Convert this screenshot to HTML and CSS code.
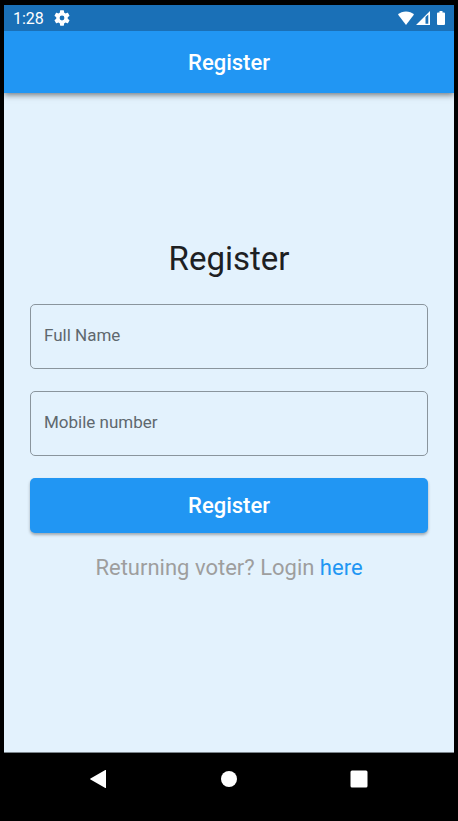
FILE: index.html
```html
<!DOCTYPE html>
<html lang="en">
<head>
<meta charset="utf-8">
<meta name="viewport" content="width=device-width, initial-scale=1">
<title>Register</title>
<link rel="stylesheet" href="styles.css">
</head>
<body>
<div class="device">
  <div class="screen">
    <div class="status-bar">
      <div class="status-group status-left">
        <span>1:28</span>
        <svg width="16" height="16" viewBox="2 2 20 20" fill="currentColor" aria-hidden="true"><path d="M19.14 12.94c.04-.3.06-.61.06-.94 0-.32-.02-.64-.07-.94l2.03-1.58a.49.49 0 0 0 .12-.61l-1.92-3.32a.49.49 0 0 0-.59-.22l-2.39.96c-.5-.38-1.03-.7-1.62-.94l-.36-2.54a.48.48 0 0 0-.48-.41h-3.84c-.24 0-.43.17-.47.41l-.36 2.54c-.59.24-1.13.57-1.62.94l-2.39-.96c-.22-.08-.47 0-.59.22L2.74 8.87c-.12.21-.08.47.12.61l2.03 1.58c-.05.3-.09.63-.09.94s.02.64.07.94l-2.03 1.58a.49.49 0 0 0-.12.61l1.92 3.32c.12.22.37.29.59.22l2.39-.96c.5.38 1.03.7 1.62.94l.36 2.54c.05.24.24.41.48.41h3.84c.24 0 .44-.17.47-.41l.36-2.54c.59-.24 1.13-.56 1.62-.94l2.39.96c.22.08.47 0 .59-.22l1.92-3.32a.48.48 0 0 0-.12-.61l-2.01-1.58zM12 15a3 3 0 1 1 0-6 3 3 0 0 1 0 6z"/></svg>
      </div>
      <div class="status-group status-right">
        <svg width="16" height="14" viewBox="0 0 16 14" fill="currentColor" aria-hidden="true"><path d="M8 14 0 3.6C2 1.700 4.900.5 8 .5s6 1.200 8 3.100z"/></svg>
        <svg width="14" height="14" viewBox="0 0 14 14" fill="currentColor" aria-hidden="true"><path d="M0 14 14 0v14zM9.500 6v6.800h2.800V3.500z" fill-rule="evenodd"/></svg>
        <svg class="battery" width="8" height="14" viewBox="0 0 8 14" fill="currentColor" aria-hidden="true"><path d="M2.500 0h3v1.500H7a1 1 0 0 1 1 1V13a1 1 0 0 1-1 1H1a1 1 0 0 1-1-1V2.500a1 1 0 0 1 1-1h1.500z"/></svg>
      </div>
    </div>
    <header class="app-bar">Register</header>
    <main class="content">
      <h1 class="title">Register</h1>
      <form class="form">
        <div class="field">
          <input class="field-input" id="full-name" type="text" placeholder=" ">
          <label class="field-label" for="full-name">Full Name</label>
        </div>
        <div class="field">
          <input class="field-input" id="mobile" type="tel" placeholder=" ">
          <label class="field-label" for="mobile">Mobile number</label>
        </div>
        <button class="submit" type="submit">Register</button>
      </form>
      <p class="login">Returning voter? Login <a class="login-link" href="#login">here</a></p>
    </main>
  </div>
  <nav class="nav-bar" aria-label="System">
    <button class="nav-button" type="button" aria-label="Back"><svg width="18" height="18" viewBox="0 0 18 18" fill="currentColor"><path d="M16 .4v17.200q0 .7-.7.300L.5 9.500q-.8-.5 0-1L15.300.1q.7-.4.7.3z"/></svg></button>
    <button class="nav-button" type="button" aria-label="Home"><svg width="18" height="18" viewBox="0 0 18 18" fill="currentColor"><circle cx="9" cy="9" r="8"/></svg></button>
    <button class="nav-button" type="button" aria-label="Recent apps"><svg width="18" height="18" viewBox="0 0 18 18" fill="currentColor"><rect x=".5" y=".5" width="17" height="17" rx="1.500"/></svg></button>
  </nav>
</div>
</body>
</html>
```

FILE: styles.css
```css
* {
  box-sizing: border-box;
}

body {
  margin: 0;
  background: #000;
  font-family: Roboto, "Liberation Sans", sans-serif;
}

.device {
  display: flex;
  flex-direction: column;
  min-height: 100vh;
  padding: 5px 4px 0;
}

.screen {
  flex: 1;
  display: flex;
  flex-direction: column;
  background: #e3f2fd;
  border-bottom: 1px solid #7c858b;
}

.status-bar {
  display: flex;
  justify-content: space-between;
  align-items: center;
  height: 26px;
  padding: 0 9px;
  background: #1a70b7;
  color: #fff;
  font-size: 16px;
}

.status-group {
  display: flex;
  align-items: center;
}

.status-left {
  gap: 10px;
}

.status-right {
  gap: 2px;
}

.battery {
  margin-left: 5px;
}

.app-bar {
  display: flex;
  align-items: center;
  justify-content: center;
  height: 62px;
  background: #2196f3;
  color: #fff;
  font-size: 22px;
  font-weight: 500;
  box-shadow: 0 2px 6px rgba(0, 0, 0, 0.5);
  clip-path: inset(0 0 -12px 0);
}

.content {
  flex: 1;
  display: flex;
  flex-direction: column;
  justify-content: center;
  padding: 0 26px 25px;
}

.title {
  margin: 0 0 25px;
  color: #1d2022;
  font-size: 33px;
  font-weight: 400;
  line-height: 40px;
  text-align: center;
}

.form {
  display: flex;
  flex-direction: column;
  gap: 22px;
}

.field {
  display: grid;
  align-items: center;
}

.field-input,
.field-label {
  grid-area: 1 / 1;
}

.field-input {
  width: 100%;
  height: 65px;
  padding: 0 13px;
  border: 1px solid #8a959d;
  border-radius: 5px;
  background: transparent;
  color: #1d2022;
  font: inherit;
  font-size: 17px;
}

.field-label {
  padding: 0 14px 4px;
  color: #5f686e;
  font-size: 17px;
  pointer-events: none;
}

.field-input:not(:placeholder-shown) + .field-label {
  visibility: hidden;
}

.submit {
  height: 55px;
  border: 0;
  border-radius: 5px;
  background: #2196f3;
  color: #fff;
  font: inherit;
  font-size: 22px;
  font-weight: 500;
  box-shadow: 0 2px 3px rgba(0, 0, 0, 0.3);
}

.login {
  margin: 22px 0 0;
  color: #9e9e9e;
  font-size: 22px;
  line-height: 26px;
  text-align: center;
}

.login-link {
  color: #2196f3;
  text-decoration: none;
}

.nav-bar {
  display: flex;
  justify-content: center;
  height: 68px;
  padding-bottom: 16px;
}

.nav-button {
  display: flex;
  align-items: center;
  justify-content: center;
  width: 130px;
  padding: 0;
  border: 0;
  background: none;
  color: #fff;
}
```
